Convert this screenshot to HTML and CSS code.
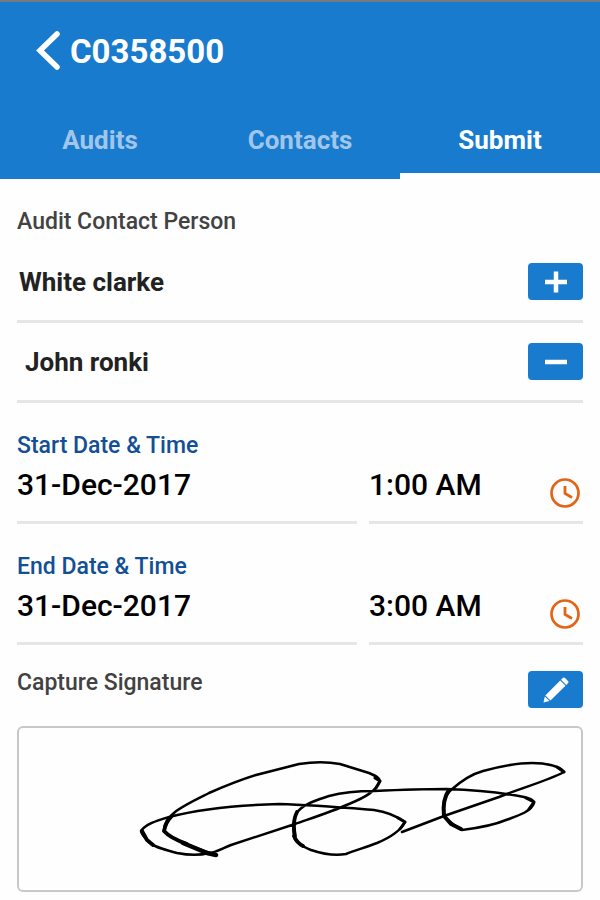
FILE: index.html
```html
<!DOCTYPE html>
<html lang="en">
<head>
    <meta charset="UTF-8">
    <meta name="viewport" content="width=device-width, initial-scale=1.0">
    <title>C0358500</title>
    <link rel="stylesheet" href="styles.css">
</head>
<body>
    <header class="header">
        <div class="title-bar">
            <a class="back" href="#" aria-label="Back">
                <svg width="24" height="40" viewBox="0 0 24 40"><path d="M21 3L4 19.500L21 36" fill="none" stroke="currentColor" stroke-width="5.500" stroke-linecap="round" stroke-linejoin="miter"/></svg>
            </a>
            <h1>C0358500</h1>
        </div>
        <nav class="tabs">
            <a href="#audits">Audits</a>
            <a href="#contacts">Contacts</a>
            <a href="#submit" class="active">Submit</a>
        </nav>
    </header>

    <main class="content">
        <!-- Contact persons -->
        <h2 class="section-label">Audit Contact Person</h2>
        <ul class="contacts">
            <li class="contact">
                <span>White clarke</span>
                <button class="icon-button" type="button" aria-label="Add contact">
                    <svg width="22" height="22" viewBox="0 0 22 22"><path d="M11 0.500V21.500M0 11H22" stroke="currentColor" stroke-width="4.500"/></svg>
                </button>
            </li>
            <li class="contact added">
                <span>John ronki</span>
                <button class="icon-button" type="button" aria-label="Remove contact">
                    <svg width="22" height="22" viewBox="0 0 22 22"><path d="M0 11H22" stroke="currentColor" stroke-width="4.500"/></svg>
                </button>
            </li>
        </ul>

        <!-- Start and end times -->
        <div class="date-group">
            <label for="startDate">Start Date &amp; Time</label>
            <div class="date-row">
                <div class="field">
                    <input type="text" id="startDate" value="31-Dec-2017">
                </div>
                <div class="field">
                    <input type="text" id="startTime" value="1:00 AM" aria-label="Start time">
                    <button class="clock" type="button" aria-label="Pick start time">
                        <svg width="30" height="30" viewBox="0 0 30 30" fill="none" stroke="currentColor"><circle cx="15" cy="15" r="13.500" stroke-width="2.700"/><path d="M15 8V15.500L22 19.500" stroke-width="2.800"/></svg>
                    </button>
                </div>
            </div>
        </div>
        <div class="date-group">
            <label for="endDate">End Date &amp; Time</label>
            <div class="date-row">
                <div class="field">
                    <input type="text" id="endDate" value="31-Dec-2017">
                </div>
                <div class="field">
                    <input type="text" id="endTime" value="3:00 AM" aria-label="End time">
                    <button class="clock" type="button" aria-label="Pick end time">
                        <svg width="30" height="30" viewBox="0 0 30 30" fill="none" stroke="currentColor"><circle cx="15" cy="15" r="13.500" stroke-width="2.700"/><path d="M15 8V15.500L22 19.500" stroke-width="2.800"/></svg>
                    </button>
                </div>
            </div>
        </div>

        <!-- Signature -->
        <div class="signature-head">
            <h2 class="section-label">Capture Signature</h2>
            <button class="icon-button" type="button" aria-label="Edit signature">
                <svg width="26" height="26" viewBox="0 0 26 26" fill="currentColor"><path d="M0.500 25.500L1.800 19.500L6.500 24Z"/><path d="M2.300 18.500L17.200 3.500L22.500 8.800L7.500 23.600Z"/><path d="M18 2.700L20 0.800Q21 0 22 1L25 4Q26 5 25.200 6L23.300 8Z"/></svg>
            </button>
        </div>
        <div class="signature">
            <svg viewBox="20 728 562 162" fill="none" stroke="#000" stroke-linecap="round" stroke-linejoin="round">
                <path stroke-width="2.500" d="M217 855C198 849 174 840 165 831C164 814 190 803 210 793C226 786 241 780 257 775L300 764C313 762 330 762 341 764L370 773C377 776 381 778 381 781C377 791 367 797 350 804C332 812 313 818 296 824L232 845C222 849 216 853 210 853C199 856 188 855 178 853C165 849 156 848 150 842C145 837 142 834 142 831C147 824 157 821 170 817C200 809 240 805 280 804C315 805 350 808 375 810C389 812 399 817 406 822C401 832 390 838 378 843C365 848 357 850 347 854C336 856 324 854 312 850C302 846 295 841 295 836C294 828 294 820 297 814C303 804 318 800 330 796C345 792 361 791 375 791C397 790 420 789 447 789C475 790 505 793 525 797C532 799 535 800 535 803C532 812 518 816 507 820C493 826 479 828 463 830C456 827 450 821 445 816C443 807 445 796 452 790C462 781 473 774 484 771C499 767 519 763 533 763C547 763 561 766 565 772C548 781 525 787 500 797L445 816L403 832"/>
                <path stroke-width="3.800" d="M172 817Q167 822 165 831Q171 838 188 844"/>
                <path stroke-width="4.500" d="M184 843L208 853L217 855"/>
                <path stroke-width="3.800" d="M143 831L148 840L154 845M296 836C294 826 295 818 298 812M295 836Q298 843 304 846"/>
                <path stroke-width="4" d="M450 790C445 797 444 807 445 816L452 824L462 829"/>
                <path stroke-width="3" d="M376 778L381 781L377 788M399 818L406 822L401 829M527 798L535 802L530 809M558 767L565 772"/>
            </svg>
        </div>
    </main>
</body>
</html>
```

FILE: styles.css
```css
* {
    box-sizing: border-box;
}
body {
    margin: 0;
    background-color: #fefefe;
    color: #222;
    font-family: Roboto, Arial, sans-serif;
}
h1, h2, ul {
    margin: 0;
    padding: 0;
}
svg {
    display: block;
}
button {
    padding: 0;
    border: none;
    cursor: pointer;
}

/* Header */
.header {
    border-top: 2px solid #757a80;
    background-color: #187bcd;
}
.title-bar {
    display: flex;
    align-items: center;
    gap: 10px;
    height: 98px;
    padding: 0 36px;
}
.back {
    color: #fff;
}
h1 {
    color: #fff;
    font-size: 33px;
    font-weight: 700;
}
.tabs {
    display: grid;
    grid-template-columns: repeat(3, 1fr);
}
.tabs a {
    height: 79px;
    border-bottom: 6px solid transparent;
    color: #a2c6ea;
    font-size: 26px;
    font-weight: 700;
    line-height: 80px;
    text-align: center;
    text-decoration: none;
}
.tabs .active {
    border-bottom-color: #fff;
    color: #fff;
}

/* Content */
.content {
    padding: 31px 17px 8px;
}
.section-label {
    color: #424242;
    font-size: 23px;
    font-weight: 500;
    line-height: 24px;
}
.contacts {
    padding-top: 9px;
    list-style: none;
}
.contact {
    display: flex;
    align-items: center;
    justify-content: space-between;
    height: 80px;
    padding-left: 2px;
    border-bottom: 3px solid #e6e6e6;
    font-size: 26px;
    font-weight: 700;
}
.contact.added {
    padding-left: 8px;
}
.icon-button {
    display: flex;
    align-items: center;
    justify-content: center;
    width: 55px;
    height: 37px;
    border-radius: 4px;
    background-color: #187bcd;
    color: #fff;
}

/* Date and time fields */
.date-group {
    padding-top: 29px;
}
.date-group label {
    display: block;
    color: #134f94;
    font-size: 23px;
    font-weight: 500;
    line-height: 28px;
}
.date-row {
    display: grid;
    grid-template-columns: minmax(0, 340fr) minmax(0, 214fr);
    gap: 12px;
}
.field {
    display: flex;
    align-items: center;
    height: 64px;
    border-bottom: 3px solid #e6e6e6;
}
.field input {
    flex: 1;
    min-width: 0;
    height: 50px;
    margin-bottom: 12px;
    padding: 0;
    border: none;
    background: none;
    color: #000;
    font-family: inherit;
    font-size: 30px;
    font-weight: 500;
}
.clock {
    margin: 4px 3px 0 0;
    background: none;
    color: #e36414;
}

/* Signature */
.signature-head {
    display: flex;
    justify-content: space-between;
    padding: 26px 0 18px;
}
.signature {
    border: 2px solid #c8c8c8;
    border-radius: 6px;
}
```
